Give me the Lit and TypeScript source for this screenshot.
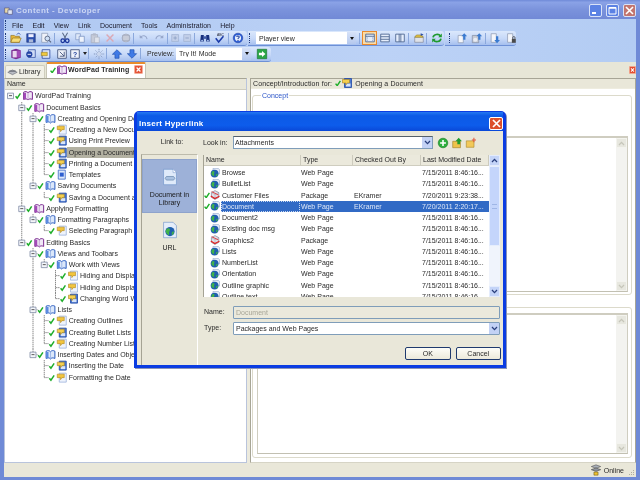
import { LitElement, css, html, svg, SVGTemplateResult } from "lit";
import { customElement } from "lit/decorators.js";

type TreeNode = { t: string; i: string; sel?: boolean; kids?: TreeNode[] };

const ROW = 11.25;

const check = svg`<path d="M.6 3.6 2.2 5.6 5.4 .8" fill="none" stroke="#1fae2a" stroke-width="1.5"/>`;

// tree and list icons, drawn in a 10x10 box
const small: Record<string, SVGTemplateResult> = {
  purple: svg`<path d="M.6 1.6C2.4.6 4 .8 5 2.2 6 .8 7.6.6 9.4 1.6V8.8C7.6 8 6 8 5 9.4 4 8 2.4 8 .6 8.8Z" fill="#f0e8f6" stroke="#7b2a90"/><path d="M5 2.2V9.2" stroke="#b48ac4" stroke-width=".7"/><path d="M.6 2.5V8.8L3 8.4V2Z" fill="#a24ab8"/>`,
  blue: svg`<path d="M.6 1.6C2.4.6 4 .8 5 2.2 6 .8 7.6.6 9.4 1.6V8.8C7.6 8 6 8 5 9.4 4 8 2.4 8 .6 8.8Z" fill="#dce8fa" stroke="#2a5cc0"/><path d="M5 2.2V9.2" stroke="#8aa8e0" stroke-width=".7"/><path d="M.6 2.5V8.8L3 8.4V2Z" fill="#5a8ae0"/>`,
  yellow: svg`<path d="M2.5.5H9.5V9.5H2.5Z" fill="#eef3fc" stroke="#9db4dc" stroke-width=".8"/><path d="M.5 1.5H7.5V5H5.2L3.8 7V5H.5Z" fill="#f2c53c" stroke="#b08820" stroke-width=".6"/>`,
  bluetopic: svg`<path d="M2.5.5H9.5V9.5H2.5Z" fill="#4a78d0" stroke="#1f47a4" stroke-width=".8"/><path d="M4 5.5H8.5V8.5H4Z" fill="#d8e4f8"/><path d="M.5 1.5H7.5V5H5.2L3.8 7V5H.5Z" fill="#f5cf4e" stroke="#a88420" stroke-width=".6"/>`,
  doc: svg`<path d="M1.5.5H8.5V9.5H1.5Z" fill="#dfe9fb" stroke="#3a66c4" stroke-width=".8"/><path d="M3 3H7V7H3Z" fill="#2f5fd0"/>`,
  globe: svg`<path d="M3 .3H8.2L9.6 1.8V6H3Z" fill="#e6ecf8" stroke="#8ca0c8" stroke-width=".6"/><circle cx="4.6" cy="5.6" r="3.9" fill="#1f5fae"/><path d="M2.4 3.2C4 2.8 5 3.6 4.4 4.8 3.4 5.6 4.8 6.6 4 8 2.6 8 1.6 6.6 1.2 5.4ZM6 6.4 7.8 5.4 7.4 7.8 6.2 8.4Z" fill="#3fb24a"/>`,
  package: svg`<path d="M1.4 2.6 5 .6 8.8 2.6V7.4L5 9.4 1.4 7.4Z" fill="#dfe2ea" stroke="#70768a" stroke-width=".6"/><path d="M1.4 2.6 5 4.6 8.8 2.6M5 4.6V9.4" fill="none" stroke="#8a90a0" stroke-width=".4"/><path d="M.8 6 4.8 8.6 9.4 6.2" fill="none" stroke="#e21e1e" stroke-width="1.2"/><path d="M1.6 1.6 8.4 5" stroke="#e21e1e" stroke-width=".8"/>`,
};

const tree: TreeNode = {
  t: "WordPad Training", i: "purple", kids: [
    { t: "Document Basics", i: "purple", kids: [
      { t: "Creating and Opening Documents", i: "blue", kids: [
        { t: "Creating a New Document", i: "yellow" },
        { t: "Using Print Preview", i: "bluetopic" },
        { t: "Opening a Document", i: "bluetopic", sel: true },
        { t: "Printing a Document", i: "bluetopic" },
        { t: "Templates", i: "doc" },
      ] },
      { t: "Saving Documents", i: "blue", kids: [{ t: "Saving a Document as a File", i: "bluetopic" }] },
    ] },
    { t: "Applying Formatting", i: "purple", kids: [
      { t: "Formatting Paragraphs", i: "blue", kids: [{ t: "Selecting Paragraph Text", i: "yellow" }] },
    ] },
    { t: "Editing Basics", i: "purple", kids: [
      { t: "Views and Toolbars", i: "blue", kids: [
        { t: "Work with Views", i: "blue", kids: [
          { t: "Hiding and Displaying Rulers", i: "yellow" },
          { t: "Hiding and Displaying Toolbars", i: "yellow" },
          { t: "Changing Word Wrap", i: "bluetopic" },
        ] },
      ] },
      { t: "Lists", i: "blue", kids: [
        { t: "Creating Outlines", i: "yellow" },
        { t: "Creating Bullet Lists", i: "bluetopic" },
        { t: "Creating Number Lists", i: "yellow" },
      ] },
      { t: "Inserting Dates and Objects", i: "blue", kids: [
        { t: "Inserting the Date", i: "bluetopic" },
        { t: "Formatting the Date", i: "yellow" },
      ] },
    ] },
  ],
};

const files = [
  ["Browse", "globe", "Web Page", "", "7/15/2011 8:46:16..."],
  ["BulletList", "globe", "Web Page", "", "7/15/2011 8:46:16..."],
  ["Customer Files", "package", "Package", "EKramer", "7/20/2011 9:23:38..."],
  ["Document", "globe", "Web Page", "EKramer", "7/20/2011 2:20:17..."],
  ["Document2", "globe", "Web Page", "", "7/15/2011 8:46:16..."],
  ["Existing doc msg", "globe", "Web Page", "", "7/15/2011 8:46:16..."],
  ["Graphics2", "package", "Package", "", "7/15/2011 8:46:16..."],
  ["Lists", "globe", "Web Page", "", "7/15/2011 8:46:16..."],
  ["NumberList", "globe", "Web Page", "", "7/15/2011 8:46:16..."],
  ["Orientation", "globe", "Web Page", "", "7/15/2011 8:46:16..."],
  ["Outline graphic", "globe", "Web Page", "", "7/15/2011 8:46:16..."],
  ["Outline text", "globe", "Web Page", "", "7/15/2011 8:46:16..."],
];

// toolbar icons, 14x14
const tb: Record<string, SVGTemplateResult> = {
  open: svg`<path d="M1 4H5L6 5H11V12H1Z" fill="#e9b93a" stroke="#8a6a18" stroke-width=".7"/><path d="M3 7H13L11 12H1Z" fill="#f7dd78" stroke="#8a6a18" stroke-width=".7"/><path d="M8 3C9 1 11 1 12 3" fill="none" stroke="#2a4fb0"/>`,
  save: svg`<path d="M2 2H12V12H2Z" fill="#2b4fae" stroke="#14296e" stroke-width=".6"/><path d="M4 2.5H10V6H4Z" fill="#eef"/><path d="M4.5 8.5H9.5V12H4.5Z" fill="#aab8d8"/>`,
  preview: svg`<path d="M2 1.5H9V12H2Z" fill="#eef1f8" stroke="#7c8ba8" stroke-width=".7"/><circle cx="8.6" cy="7.6" r="2.8" fill="#cfe0f6" stroke="#56627c"/><path d="M10.6 9.8 12.8 12" stroke="#56627c" stroke-width="1.3"/>`,
  cut: svg`<path d="M4 1 8 8M10 1 6 8" stroke="#5a6a88" stroke-width="1.2"/><circle cx="4.4" cy="10.2" r="2.1" fill="none" stroke="#16329a" stroke-width="1.5"/><circle cx="9.6" cy="10.2" r="2.1" fill="none" stroke="#16329a" stroke-width="1.5"/>`,
  copy: svg`<path d="M2 2H7.5V9H2Z" fill="#dfe8f8" stroke="#7e95c4" stroke-width=".8"/><path d="M6 5H12V12H6Z" fill="#eef3fc" stroke="#6e88bc" stroke-width=".8"/>`,
  paste: svg`<path d="M2.5 3H10V12.5H2.5Z" fill="#c6cbd8" stroke="#a2aabd" stroke-width=".8"/><path d="M4.5 1.5H8V4H4.5Z" fill="#b3bacb"/><path d="M6.5 6H12V12.5H6.5Z" fill="#dfe3ec" stroke="#a8afc0" stroke-width=".7"/>`,
  del: svg`<path d="M3 3 11 11M11 3 3 11" stroke="#dba8b4" stroke-width="1.7"/>`,
  misc: svg`<circle cx="7" cy="7" r="4.6" fill="#c8ccd8" stroke="#a6adc0"/><path d="M3 4H11V10H3Z" fill="none" stroke="#a6adc0" stroke-width=".8"/>`,
  undo: svg`<path d="M3.4 6C5 3.4 9.8 3.6 10.6 8.4" fill="none" stroke="#98a8cc" stroke-width="1.2"/><path d="M2 3.4V7.4H6Z" fill="#98a8cc"/>`,
  redo: svg`<path d="M10.6 6C9 3.4 4.2 3.6 3.4 8.4" fill="none" stroke="#98a8cc" stroke-width="1.2"/><path d="M12 3.4V7.4H8Z" fill="#98a8cc"/>`,
  boxp: svg`<path d="M2 3H10V11H2Z" fill="#c2cfe8" stroke="#9fb0d0" stroke-width=".8"/><path d="M4 7H8M6 5V9" stroke="#8ea0c4"/>`,
  boxm: svg`<path d="M2 3H10V11H2Z" fill="#c2cfe8" stroke="#9fb0d0" stroke-width=".8"/><path d="M4 7H8" stroke="#8ea0c4"/>`,
  find: svg`<path d="M2.2 3.4H5.6V11H1.4Z M8.4 3.4H11.8L12.6 11H8.4Z" fill="#18307e"/><path d="M5.4 5H8.6V8H5.4Z" fill="#3f5aa8"/><circle cx="3.6" cy="10" r="1.1" fill="#a9c4f0"/><circle cx="10.4" cy="10" r="1.1" fill="#a9c4f0"/>`,
  spell: svg`<text x="3.4" y="4.2" font-size="4" font-family="Liberation Sans" fill="#223">ABC</text><path d="M2 7.4 5.4 11.6 11 5" fill="none" stroke="#1a3aa8" stroke-width="1.8"/>`,
  help: svg`<circle cx="7" cy="7" r="5.6" fill="#2f5fd6" stroke="#1b3c9a" stroke-width=".6"/><circle cx="7" cy="7" r="3.6" fill="#e8effc"/><path d="M5.4 5.6C5.8 4.2 8.6 4.4 8.4 6 8.2 7 7 7 7 8.2" fill="none" stroke="#1b3c9a" stroke-width="1.2"/><circle cx="7" cy="9.8" r=".8" fill="#1b3c9a"/>`,
  v1: svg`<path d="M2 2.5H12V11.5H2Z" fill="#e6eefc" stroke="#4a648e"/><path d="M2 5H12" stroke="#4a648e"/><path d="M4 5.5V11M10 5.5V11" stroke="#8ea4c8" stroke-dasharray="1 1"/>`,
  v2: svg`<path d="M2 2.5H12V11.5H2Z" fill="#e6eefc" stroke="#4a648e"/><path d="M2 5.5H12M2 8.5H12" stroke="#4a648e"/>`,
  v3: svg`<path d="M2 2.5H12V11.5H2Z" fill="#e6eefc" stroke="#4a648e"/><path d="M6 2.5V11.5M8 2.5V11.5" stroke="#4a648e"/>`,
  pub: svg`<path d="M2 6H12V12H2Z" fill="#dfe2e8" stroke="#7a8090" stroke-width=".7"/><path d="M4 3.5H10L12 6H2Z" fill="#e8c94a" stroke="#8a7420" stroke-width=".7"/><path d="M9 1.4 12.4 3 9 4.6Z" fill="#2e4ea8"/>`,
  refresh: svg`<path d="M2.4 6.4C3 2.6 8.8 1.6 11 4.4" fill="none" stroke="#1f9a2e" stroke-width="2"/><path d="M12.6 1.8V6H8.4Z" fill="#1f9a2e"/><path d="M11.6 7.6C11 11.4 5.2 12.4 3 9.6" fill="none" stroke="#1f9a2e" stroke-width="2"/><path d="M1.4 12.2V8H5.6Z" fill="#1f9a2e"/>`,
  up1: svg`<path d="M2.5 4H8.5V12.5H2.5Z" fill="#f4f6fb" stroke="#8a96ae" stroke-width=".8"/><path d="M9.6 1.4 13 5H11V9H8.4V5H6.4Z" fill="#3a7ad0"/>`,
  up2: svg`<path d="M1.5 4H9V12.5H1.5Z" fill="#c6cad4" stroke="#7e8aa2" stroke-width=".8"/><circle cx="5" cy="9" r="2.4" fill="#e8ecf4"/><path d="M9.6 1.4 13 5H11V9H8.4V5H6.4Z" fill="#3a7ad0"/>`,
  down1: svg`<path d="M2.5 2H8.5V12H2.5Z" fill="#f4f6fb" stroke="#8a96ae" stroke-width=".8"/><path d="M9.4 13 6.2 9.4H8.2V5H10.8V9.4H12.8Z" fill="#3a7ad0"/>`,
  lock: svg`<path d="M3 2H9V12H3Z" fill="#f4f6fb" stroke="#8a96ae" stroke-width=".8"/><path d="M8 8H12.6V12.6H8Z" fill="#4a4a4a"/><path d="M9 8V6.4C9 5 11.6 5 11.6 6.4V8" fill="none" stroke="#4a4a4a"/>`,
  t1: svg`<path d="M1.5 2.5 7 1 12.5 2.5V11.5L7 13 1.5 11.5Z" fill="#7b2a90"/><path d="M3 3.4H8V11H3Z" fill="#e8d4ee"/><path d="M8 3H12V11H8Z" fill="#a24ab8"/>`,
  t2: svg`<path d="M4 2H12V11H4Z" fill="#cfdcf6" stroke="#24429a" stroke-width=".8"/><circle cx="5" cy="7.4" r="3.6" fill="#2344a4"/><path d="M3 7.4H7" stroke="#fff"/>`,
  t3: svg`<path d="M2.5 2H11.5V12H2.5Z" fill="#dde7fa" stroke="#24429a" stroke-width=".9"/><path d="M1.5 5H8.5V9H1.5Z" fill="#efc83e" stroke="#8a6f18" stroke-width=".6"/>`,
  t4: svg`<path d="M2 2H12V12H2Z" fill="#eef2fb" stroke="#3f4f7a"/><path d="M4.4 4.4 9.6 9.6M9.6 4.4V9.6H4.4" fill="none" stroke="#3f4f7a"/>`,
  t5: svg`<path d="M2 2H12V12H2Z" fill="#eef2fb" stroke="#3f4f7a"/><text x="4.6" y="10.4" font-size="8" font-family="Liberation Sans" font-weight="700" fill="#24429a">?</text>`,
  spark: svg`<path d="M7 1V13M1 7H13M3 3 11 11M11 3 3 11" stroke="#7d8fb4" stroke-dasharray="1.4 .8"/><circle cx="7" cy="7" r="2.2" fill="#c9d6ee"/>`,
  up: svg`<path d="M7 2 12.4 7.4H9.4V12H4.6V7.4H1.6Z" fill="#3f7ae6" stroke="#1a4aa8" stroke-width=".7"/>`,
  down: svg`<path d="M7 12 12.4 6.6H9.4V2H4.6V6.6H1.6Z" fill="#3f7ae6" stroke="#1a4aa8" stroke-width=".7"/>`,
  go: svg`<path d="M1.5 1.5H12.5V12.5H1.5Z" fill="#2aa646" stroke="#14702a" stroke-width=".7"/><path d="M7 3.4 11 7 7 10.6V8.6H3.4V5.4H7Z" fill="#fff"/>`,
  tabclose: svg`<path d="M1 1H13V13H1Z" fill="#e24a2e" stroke="#f5a58c" stroke-width="1.2"/><path d="M4 4 10 10M10 4 4 10" stroke="#fff" stroke-width="2"/>`,
  library: svg`<path d="M1 8 7 5 13 8 7 11Z" fill="#b9bcc4" stroke="#5a5e68" stroke-width=".7"/><path d="M3 5.6H11V7.4H3Z" fill="#70747e"/>`,
  online: svg`<path d="M1.5 3 7 1 12.5 3 7 5Z" fill="#aab0ba" stroke="#555" stroke-width=".7"/><path d="M1.5 6.6 7 4.6 12.5 6.6 7 8.6Z" fill="#8e949e" stroke="#444" stroke-width=".7"/><path d="M4.6 9.4H9.4V13H4.6Z" fill="#f1c32e" stroke="#5a4a10" stroke-width=".6"/>`,
  add: svg`<circle cx="7" cy="7" r="5.6" fill="#2eae3c" stroke="#157a24" stroke-width=".7"/><path d="M7 3.6V10.4M3.6 7H10.4" stroke="#fff" stroke-width="1.8"/>`,
  folderup: svg`<path d="M2 5H11V12.5H2Z" fill="#eec24a" stroke="#9a7a20" stroke-width=".7"/><path d="M9 1 12.8 5H10.6V8.6H7.4V5H5.2Z" fill="#1f9a2e"/>`,
  foldernew: svg`<path d="M1.5 4.5H10.5V12H1.5Z" fill="#f2c95a" stroke="#a8842a" stroke-width=".7"/><path d="M10.4 1V6M8 3.4H12.8" stroke="#e2543a" stroke-width="1.2"/>`,
  docLib: svg`<path d="M2 1H9.4L12 3.6V13H2Z" fill="#dfeafa" stroke="#6d92c8" stroke-width=".5"/><path d="M9.4 1V3.6H12" fill="#fff" stroke="#6d92c8" stroke-width=".4"/><path d="M4.2 6.6H9.8L10.8 8 9.8 9.4H4.2L3.2 8Z" fill="#aac2e2" stroke="#5e7ea6" stroke-width=".5"/>`,
  docUrl: svg`<path d="M2 1H9.4L12 3.6V13H2Z" fill="#e4edfa" stroke="#6d92c8" stroke-width=".5"/><circle cx="7" cy="8.2" r="3.6" fill="#1f5fae"/><path d="M5 5.6C7 5.4 7.6 7 6.6 8 5.8 9 7 10.2 6 11 4.4 10.4 3.4 8.6 3.6 7.4ZM8.4 8.6 10.2 8 9.6 10.4 8.4 11Z" fill="#3fb24a"/>`,
};

const icon = (n: string) => html`<svg class="ic" viewBox="0 0 14 14">${tb[n]}</svg>`;

@customElement("app-root")
export class AppRoot extends LitElement {
  static styles = css`
    :host {
      display: block;
      width: 640px;
      height: 480px;
      font-family: "Liberation Sans", Arial, sans-serif;
      font-size: 7px;
      color: #2a2a2a;
    }
    .win {
      position: relative;
      width: 640px;
      height: 480px;
      display: flex;
      flex-direction: column;
      overflow: hidden;
      background: #6f8ad6;
      filter: blur(0.3px);
    }
    .title {
      height: 19px;
      flex: none;
      display: flex;
      align-items: center;
      padding: 2px 4px 1px 4px;
      box-sizing: border-box;
      background: linear-gradient(#6f8ad8, #8aa2e6 12%, #7b93dc 50%, #7189d6);
      gap: 3px;
    }
    .title-text {
      flex: 1;
      font-size: 8px;
      font-weight: bold;
      letter-spacing: 0.45px;
      color: #cbd6f4;
    }
    .title-icon { width: 9px; height: 9px; }
    .wbtn {
      width: 11px;
      height: 11px;
      border: 1px solid #d9e2f7;
      border-radius: 2px;
      background: #5c82e4;
      display: flex;
      align-items: center;
      justify-content: center;
      margin-left: 1px;
    }
    .wbtn.close { background: #c2756f; }
    .wbtn svg { width: 9px; height: 9px; }
    .client {
      flex: 1;
      min-height: 0;
      margin: 0 4px 3px;
      display: flex;
      flex-direction: column;
    }
    .bars {
      height: 43px;
      flex: none;
      display: flex;
      flex-direction: column;
      background: linear-gradient(90deg, #afc8f2, #bcd2f6 60%, #b3ccf3);
    }
    .menu {
      height: 13px;
      display: flex;
      align-items: center;
      padding-left: 1px;
    }
    .menu span { margin-right: 9.2px; color: #1a1a2a; }
    .menu .grip { margin-right: 5px; }
    .grip {
      width: 1px;
      height: 10px;
      border-left: 1px dotted #1f3a7c;
      flex: none;
    }
    .tbrow { height: 15px; display: flex; margin-bottom: 0.5px; }
    .tb {
      display: flex;
      align-items: center;
      height: 15px;
      box-sizing: border-box;
      border-bottom: 1px solid #6d90d6;
      border-radius: 0 3px 3px 0;
      background: linear-gradient(#dbe8fc, #c6d8f8 55%, #a5bfee);
      padding-left: 1px;
    }
    .tb .grip { margin-right: 1px; }
    .b {
      width: 15.3px;
      height: 14px;
      flex: none;
      display: flex;
      align-items: center;
      justify-content: center;
      box-sizing: border-box;
    }
    .b.n { width: 12px; }
    .b.on {
      background: #fbdca8;
      border: 1.5px solid #e98a2e;
    }
    .ic { width: 12px; height: 12px; display: block; flex: none; }
    .sep {
      width: 3px;
      height: 11px;
      flex: none;
      box-sizing: border-box;
      border-left: 1px solid #8ba8dc;
    }
    .combo {
      height: 12px;
      background: #fff;
      display: flex;
      align-items: center;
      box-sizing: border-box;
      padding-left: 3px;
      flex: none;
    }
    .combo .txt { flex: 1; white-space: nowrap; overflow: hidden; }
    .arrow {
      width: 9px;
      height: 100%;
      flex: none;
      background: linear-gradient(#d7e2f8, #b4c8ee);
      display: flex;
      align-items: center;
      justify-content: center;
    }
    .arrow::after {
      content: "";
      border: 2.5px solid transparent;
      border-top: 3px solid #111;
      border-bottom: 0;
    }
    .label { margin: 0 2px 0 4px; white-space: nowrap; width: 27px; flex: none; }
    .drop {
      width: 7px;
      display: flex;
      justify-content: center;
    }
    .drop::after {
      content: "";
      border: 2px solid transparent;
      border-top: 3px solid #222;
      border-bottom: 0;
    }
    .tabs {
      height: 16px;
      flex: none;
      display: flex;
      align-items: flex-end;
      padding-left: 1px;
      background: #e7e6d7;
      gap: 1px;
      position: relative;
    }
    .tab {
      display: flex;
      align-items: center;
      box-sizing: border-box;
      white-space: nowrap;
    }
    .tab.lib {
      width: 40px;
      height: 13px;
      background: #f1f0e7;
      border: 1px solid #cfcdbd;
      border-bottom: 0;
      padding: 0 0 2px 1px;
      gap: 1px;
      border-radius: 2px 2px 0 0;
    }
    .tab.act {
      width: 100px;
      height: 16px;
      background: #fff;
      border-top: 2px solid #e88e2e;
      border-left: 1px solid #c8c6b6;
      border-right: 1px solid #c8c6b6;
      padding: 0 0 3px 3px;
      font-weight: bold;
      border-radius: 2px 2px 0 0;
    }
    .tab.act .chk { width: 6px; height: 6px; margin-right: 1px; }
    .tab.act .bk { width: 10px; height: 10px; margin-right: 1px; }
    .tab.act .name { flex: 1; letter-spacing: 0.1px; }
    .tab.act .x { width: 9px; height: 9px; margin-right: 2px; }
    .tabs .x-right {
      margin-left: auto;
      width: 7px;
      height: 8px;
      align-self: center;
    }
    .panes {
      flex: 1;
      min-height: 0;
      display: flex;
      gap: 3px;
      background: #eceadd;
    }
    .left {
      width: 243px;
      flex: none;
      box-sizing: border-box;
      border: 1px solid #b9c4dc;
      border-top-color: #a7a596;
      background: #fff;
      display: flex;
      flex-direction: column;
      overflow: hidden;
    }
    .head {
      height: 10px;
      flex: none;
      line-height: 10px;
      background: #e9e7d9;
      border-bottom: 1px solid #cfcdbf;
      padding-left: 2px;
    }
    .tree { padding-top: 0.4px; }
    .row {
      height: 11.25px;
      display: flex;
      align-items: center;
      white-space: nowrap;
    }
    .row svg { flex: none; height: 11.25px; display: block; }
    .row .t { padding: 0 2px; line-height: 11.25px; margin-left: -2px; }
    .row .t.sel { background: #b3b1a2; width: 180px; }
    .right {
      flex: 1;
      min-width: 0;
      box-sizing: border-box;
      border: 1px solid #a7a596;
      border-bottom-color: #d6d4c6;
      background: #fff;
      display: flex;
      flex-direction: column;
    }
    .rhead {
      height: 10px;
      flex: none;
      display: flex;
      align-items: center;
      background: #e9e7d9;
      padding: 0 0 1px 2px;
      box-sizing: border-box;
      border-bottom: 1px solid #eeecdf;
      letter-spacing: 0.1px;
    }
    .rhead svg { flex: none; }
    .rbody {
      flex: 1;
      min-height: 0;
      padding: 3px 3px 0 1px;
      display: flex;
      flex-direction: column;
      gap: 12px;
    }
    fieldset {
      margin: 0;
      padding: 0 3px 2px 4px;
      min-width: 0;
      border: 1px solid #dcdacb;
      border-radius: 3px;
      box-sizing: border-box;
    }
    legend {
      color: #2b55c8;
      padding: 0 1px;
      margin-left: 4px;
      line-height: 7px;
    }
    .f1 { padding-top: 37px; }
    .f1 .area { height: 156px; }
    .f2 { padding-top: 5px; padding-bottom: 3px; }
    .f2 .area { height: 141px; }
    .area {
      box-sizing: border-box;
      border: 1px solid #cfcdc0;
      border-top-width: 2px;
      border-bottom: 1px solid #c2c0b2;
      display: flex;
      justify-content: flex-end;
    }
    .sb {
      width: 11px;
      flex: none;
      display: flex;
      flex-direction: column;
      background: #f3f3f0;
    }
    .sb .sp { flex: 1; }
    .sb .btn {
      height: 10px;
      flex: none;
      display: flex;
      align-items: center;
      justify-content: center;
      background: #e7e7df;
      border: 1px solid #f3f3ee;
      box-sizing: border-box;
    }
    .sb svg { width: 7px; height: 5px; }
    .status {
      height: 14px;
      flex: none;
      display: flex;
      align-items: center;
      background: #e9e7d9;
      gap: 2px;
    }
    .status .fill { flex: 1; }
    .status .corner { width: 7px; height: 7px; margin: 4px 1px 0 2px; }
    .dlg {
      position: absolute;
      left: 134px;
      top: 111px;
      width: 372px;
      height: 257px;
      box-sizing: border-box;
      border: 3px solid #0a3ce2;
      border-top: 1px solid #0a3ce2;
      border-radius: 5px 5px 0 0;
      background: #e9e7d9;
      display: flex;
      flex-direction: column;
      box-shadow: 1px 1px 0 #8a94b8;
    }
    .dtitle {
      height: 19px;
      flex: none;
      display: flex;
      align-items: center;
      justify-content: space-between;
      padding: 3px 0 0 2px;
      box-sizing: border-box;
      background: linear-gradient(#2478f2, #0c5ae6 20%, #0d5ceb 70%, #0a48d8);
      color: #fff;
      font-weight: bold;
      font-size: 8px;
      letter-spacing: 0.25px;
    }
    .dclose {
      width: 14px;
      height: 13px;
      border: 1px solid #fff;
      border-radius: 2px;
      background: #dc4f2c;
      display: flex;
      align-items: center;
      justify-content: center;
      box-sizing: border-box;
    }
    .dclose svg { width: 9px; height: 9px; }
    .dbody { flex: 1; min-height: 0; display: flex; }
    .side {
      width: 60px;
      margin-left: 4px;
      flex: none;
      display: flex;
      flex-direction: column;
    }
    .side .lt { height: 23px; line-height: 21px; text-align: center; width: 62px; }
    .rail {
      flex: 1;
      box-sizing: border-box;
      width: 57px;
      border-left: 1px solid #a5a394;
      border-top: 1px solid #bdbbac;
      border-right: 1px solid #fff;
      background: #e9e7d9;
      padding-top: 4px;
    }
    .item {
      height: 54px;
      display: flex;
      flex-direction: column;
      align-items: center;
      padding-top: 7px;
      box-sizing: border-box;
      text-align: center;
      line-height: 8px;
      color: #1a1a1a;
    }
    .item.on {
      background: #9db1d8;
      border: 1px solid #8ea3cc;
    }
    .item svg { width: 18px; height: 20px; margin-bottom: 4px; flex: none; }
    .main {
      flex: 1;
      min-width: 0;
      padding: 5px 3px 0 2px;
      display: flex;
      flex-direction: column;
    }
    .look {
      height: 13px;
      display: flex;
      align-items: center;
      flex: none;
    }
    .look .lbl { width: 30px; flex: none; }
    .look .ctl {
      width: 200px;
      height: 13px;
      border: 1px solid #7f9db9;
      box-sizing: border-box;
      background: #fff;
      display: flex;
      align-items: center;
      padding-left: 1px;
      border-top-color: #55606a;
    }
    .look .ctl .t { flex: 1; }
    .xarrow {
      width: 10px;
      height: 100%;
      flex: none;
      background: #c3d2f5;
      display: flex;
      align-items: center;
      justify-content: center;
    }
    .xarrow svg { width: 7px; height: 5px; }
    .tools { display: flex; margin-left: 4px; gap: 2px; }
    .list {
      height: 142px;
      margin-top: 6px;
      flex: none;
      display: flex;
      background: #fff;
      border-left: 1px solid #a5a394;
      overflow: hidden;
    }
    .lmain { flex: 1; min-width: 0; display: flex; flex-direction: column; }
    .lhead {
      height: 10px;
      flex: none;
      display: grid;
      grid-template-columns: 97px 52px 68px 1fr;
      background: #ebe9dc;
      border-bottom: 1px solid #cfcdbf;
      line-height: 10px;
    }
    .lhead span { padding-left: 2px; border-right: 1px solid #cdcbbd; }
    .lrows { padding-top: 1px; }
    .frow { height: 11.25px; display: flex; align-items: center; }
    .frow .lead { width: 17px; flex: none; display: flex; align-items: center; }
    .frow .lead svg.c { width: 6px; height: 6px; flex: none; }
    .frow .lead svg.i { width: 10px; height: 10px; flex: none; margin-left: auto; margin-right: 1px; }
    .cells {
      flex: 1;
      min-width: 0;
      height: 100%;
      display: grid;
      grid-template-columns: 79px 53px 68px 1fr;
      line-height: 11.25px;
      white-space: nowrap;
    }
    .cells span { padding-left: 1px; overflow: hidden; }
    .cells.sel { background: #316ac5; color: #dfe8f8; }
    .cells.sel span:first-child { outline: 1px dotted #c8d8f0; outline-offset: -1px; }
    .list .sb { background: #f0f4fc; width: 11px; }
    .list .btn { background: #c4d4f8; border: 1px solid #e4ecfc; height: 11px; }
    .thumb {
      height: 80px;
      flex: none;
      background: #c4d5fb;
      border: 1px solid #e6eefd;
      box-sizing: border-box;
      display: flex;
      align-items: center;
      justify-content: center;
    }
    .thumb::after { content: ""; width: 5px; height: 3px; border-top: 1px solid #9fb6e6; border-bottom: 1px solid #9fb6e6; }
    .field {
      display: flex;
      align-items: center;
      height: 13px;
      flex: none;
      margin-top: 3px;
    }
    .field.first { margin-top: 9px; }
    .field .lbl { width: 30px; flex: none; padding: 0 0 2px 1px; box-sizing: border-box; }
    .field .in {
      flex: 1;
      height: 13px;
      box-sizing: border-box;
      border: 1px solid #7f9db9;
      border-radius: 1px;
      display: flex;
      align-items: center;
      padding-left: 2px;
      background: #fff;
    }
    .field .in.off { background: #ebe9dc; color: #a8a698; }
    .field .in .t { flex: 1; }
    .btns {
      margin: 12px -1px 0 0;
      display: flex;
      justify-content: flex-end;
      gap: 5px;
      flex: none;
    }
    .push {
      width: 45.5px;
      height: 13px;
      box-sizing: border-box;
      border: 1px solid #1f3a6e;
      border-radius: 2px;
      background: linear-gradient(#fdfdf8, #ece9da);
      font-family: inherit;
      font-size: 7px;
      color: #2a2a2a;
      padding: 0;
      line-height: 11px;
    }
  `;

  // flattens the tree, a row knows which ancestor guide lines run past it
  private rows(n: TreeNode, level: number, cont: boolean[], last: boolean): unknown[] {
    const w = 30 + ROW * level;
    const x = 5 + ROW * level;
    const mid = ROW / 2;
    const guides = cont
      .map((c, k) => (c ? svg`<path d="M${5 + ROW * k + 0.5} 0V${ROW}"/>` : null));
    const row = html`<div class="row">
      <svg width=${w} viewBox="0 0 ${w} ${ROW}">
        <g stroke="#8a8a8a" stroke-width="1" stroke-dasharray="1.4 .6" fill="none">
          ${guides}
          ${level > 0
            ? svg`<path d="M${x + 0.5} 0V${last ? mid : ROW}M${x + 0.5} ${mid}H${x + 5}"/>`
            : null}
        </g>
        ${n.kids
          ? svg`<path d="M${x - 2.5} ${mid - 2.5}h6v5.5h-6z" fill="#f4f6fa" stroke="#7f8aa4" stroke-width=".8"/><path d="M${x - 1} ${mid}h3" stroke="#333" stroke-width=".8"/>`
          : null}
        <g transform="translate(${x + 5} ${mid - 3})">${check}</g>
        <g transform="translate(${x + 13} ${mid - 5})">${small[n.i]}</g>
      </svg>
      <span class="t ${n.sel ? "sel" : ""}">${n.t}</span>
    </div>`;
    const out: unknown[] = [row];
    (n.kids ?? []).forEach((k, i, all) => {
      const isLast = i === all.length - 1;
      const next = level > 0 ? [...cont, !last] : cont;
      out.push(...this.rows(k, level + 1, level === 0 ? [false] : next, isLast));
    });
    return out;
  }

  private sb(thumb: boolean) {
    const chev = (d: string, c: string) =>
      html`<svg viewBox="0 0 7 5"><path d=${d} fill="none" stroke=${c} stroke-width="1.3"/></svg>`;
    const col = thumb ? "#2a3f7c" : "#c6c6ba";
    return html`<div class="sb">
      <div class="btn">${chev("M1 4 3.5 1.4 6 4", col)}</div>
      ${thumb ? html`<div class="thumb"></div>` : null}
      <div class="sp"></div>
      <div class="btn">${chev("M1 1 3.5 3.6 6 1", col)}</div>
    </div>`;
  }

  private xarrow() {
    return html`<div class="xarrow"><svg viewBox="0 0 7 5"><path d="M1 1 3.5 3.6 6 1" fill="none" stroke="#2a3f7c" stroke-width="1.3"/></svg></div>`;
  }

  render() {
    return html`<div class="win">
      <div class="title">
        <svg class="title-icon" viewBox="0 0 14 14">
          <path d="M1 3H8V11H1Z" fill="#e9d9a6" stroke="#55557a"/><path d="M6 6H13V13H6Z" fill="#dfe6f5" stroke="#55557a"/>
        </svg>
        <div class="title-text">Content - Developer</div>
        <div class="wbtn"><svg viewBox="0 0 9 9"><path d="M1 7H5" stroke="#fff" stroke-width="2"/></svg></div>
        <div class="wbtn"><svg viewBox="0 0 9 9"><path d="M1 1.5H8V8H1Z" fill="none" stroke="#fff"/><path d="M1 2H8" stroke="#fff" stroke-width="1.5"/></svg></div>
        <div class="wbtn close"><svg viewBox="0 0 9 9"><path d="M1 1 8 8M8 1 1 8" stroke="#fff" stroke-width="1.6"/></svg></div>
      </div>

      <div class="client">
        <div class="bars">
          <div class="menu">
            <div class="grip"></div>
            <span>File</span><span>Edit</span><span>View</span><span>Link</span><span>Document</span><span>Tools</span><span>Administration</span><span>Help</span>
          </div>

          <div class="tbrow">
            <div class="tb" style="width:243px">
              <div class="grip"></div>
              <div class="b">${icon("open")}</div><div class="b">${icon("save")}</div><div class="b">${icon("preview")}</div>
              <div class="sep"></div>
              <div class="b">${icon("cut")}</div><div class="b">${icon("copy")}</div><div class="b">${icon("paste")}</div><div class="b">${icon("del")}</div><div class="b">${icon("misc")}</div>
              <div class="sep"></div>
              <div class="b">${icon("undo")}</div><div class="b">${icon("redo")}</div>
              <div class="sep"></div>
              <div class="b n">${icon("boxp")}</div><div class="b n">${icon("boxm")}</div>
              <div class="sep"></div>
              <div class="b">${icon("find")}</div><div class="b">${icon("spell")}</div>
              <div class="sep"></div>
              <div class="b">${icon("help")}</div>
            </div>
            <div class="tb" style="width:196px;margin-left:1px">
              <div class="grip" style="margin-right:5px"></div>
              <div class="combo" style="width:100px"><span class="txt">Player view</span><div class="arrow"></div></div>
              <div class="sep" style="margin-left:3px"></div>
              <div class="b on">${icon("v1")}</div><div class="b">${icon("v2")}</div><div class="b">${icon("v3")}</div>
              <div class="sep"></div>
              <div class="b">${icon("pub")}</div>
              <div class="sep"></div>
              <div class="b">${icon("refresh")}</div>
            </div>
            <div class="tb" style="width:71px;margin-left:1px">
              <div class="grip" style="margin-right:3px;margin-left:3px"></div>
              <div class="b">${icon("up1")}</div><div class="b">${icon("up2")}</div>
              <div class="sep"></div>
              <div class="b">${icon("down1")}</div><div class="b">${icon("lock")}</div>
            </div>
          </div>

          <div class="tbrow">
            <div class="tb" style="width:267px">
              <div class="grip"></div>
              <div class="b">${icon("t1")}</div><div class="b">${icon("t2")}</div><div class="b">${icon("t3")}</div><div class="b">${icon("t4")}</div>
              <div class="b n">${icon("t5")}</div><div class="drop"></div>
              <div class="sep"></div>
              <div class="b">${icon("spark")}</div>
              <div class="sep"></div>
              <div class="b">${icon("up")}</div><div class="b">${icon("down")}</div>
              <div class="sep"></div>
              <span class="label">Preview:</span>
              <div class="combo" style="width:75px"><span class="txt">Try It! Mode</span><div class="arrow"></div></div>
              <div class="b" style="margin-left:3px">${icon("go")}</div>
            </div>
          </div>
        </div>

        <div class="tabs">
          <div class="tab lib"><svg class="ic" style="width:11px;height:11px" viewBox="0 0 14 14">${tb.library}</svg>Library</div>
          <div class="tab act">
            <svg class="chk" viewBox="0 0 6 6">${check}</svg>
            <svg class="bk" viewBox="0 0 10 10">${small.purple}</svg>
            <span class="name">WordPad Training</span>
            <svg class="x" viewBox="0 0 14 14">${tb.tabclose}</svg>
          </div>
          <svg class="x-right" viewBox="0 0 14 14" preserveAspectRatio="none">${tb.tabclose}</svg>
        </div>

        <div class="panes">
          <div class="left">
            <div class="head">Name</div>
            <div class="tree">${this.rows(tree, 0, [], true)}</div>
          </div>
          <div class="right">
            <div class="rhead">
              <span>Concept/Introduction for:</span>
              <svg width="6" height="6" viewBox="0 0 6 6" style="margin-left:3px">${check}</svg>
              <svg width="10" height="10" viewBox="0 0 10 10" style="margin:0 3px 0 1px">${small.bluetopic}</svg>
              <span>Opening a Document</span>
            </div>
            <div class="rbody">
              <fieldset class="f1">
                <legend>Concept</legend>
                <div class="area">${this.sb(false)}</div>
              </fieldset>
              <fieldset class="f2">
                <div class="area">${this.sb(false)}</div>
              </fieldset>
            </div>
          </div>
        </div>

        <div class="status">
          <div class="fill"></div>
          <svg class="ic" viewBox="0 0 14 14">${tb.online}</svg><span>Online</span>
          <svg class="corner" viewBox="0 0 7 7"><path d="M5 1h1v1H5zM3 3h1v1H3zM5 3h1v1H5zM1 5h1v1H1zM3 5h1v1H3zM5 5h1v1H5z" fill="#b0ae9e"/></svg>
        </div>
      </div>

      ${this.dialog()}
    </div>`;
  }

  private dialog() {
    return html`<div class="dlg">
      <div class="dtitle">
        <span>Insert Hyperlink</span>
        <div class="dclose"><svg viewBox="0 0 9 9"><path d="M1 1 8 8M8 1 1 8" stroke="#fff" stroke-width="1.7"/></svg></div>
      </div>
      <div class="dbody">
        <div class="side">
          <div class="lt">Link to:</div>
          <div class="rail">
            <div class="item on">
              <svg viewBox="0 0 14 14">${tb.docLib}</svg>
              <span>Document in Library</span>
            </div>
            <div class="item">
              <svg viewBox="0 0 14 14">${tb.docUrl}</svg>
              <span>URL</span>
            </div>
          </div>
        </div>
        <div class="main">
          <div class="look">
            <span class="lbl">Look in:</span>
            <div class="ctl"><span class="t">Attachments</span>${this.xarrow()}</div>
            <div class="tools">${icon("add")}${icon("folderup")}${icon("foldernew")}</div>
          </div>
          <div class="list">
            <div class="lmain">
              <div class="lhead"><span>Name</span><span>Type</span><span>Checked Out By</span><span>Last Modified Date</span></div>
              <div class="lrows">
                ${files.map(
                  ([name, ic, type, by, date]) => html`<div class="frow">
                    <div class="lead">
                      ${by
                        ? html`<svg class="c" viewBox="0 0 6 6">${check}</svg>`
                        : null}
                      <svg class="i" viewBox="0 0 10 10">${small[ic]}</svg>
                    </div>
                    <div class="cells ${name === "Document" ? "sel" : ""}">
                      <span>${name}</span><span>${type}</span><span>${by}</span><span>${date}</span>
                    </div>
                  </div>`
                )}
              </div>
            </div>
            ${this.sb(true)}
          </div>
          <div class="field first">
            <span class="lbl">Name:</span>
            <div class="in off">Document</div>
          </div>
          <div class="field">
            <span class="lbl">Type:</span>
            <div class="in" style="padding-right:0"><span class="t">Packages and Web Pages</span>${this.xarrow()}</div>
          </div>
          <div class="btns">
            <button class="push">OK</button>
            <button class="push">Cancel</button>
          </div>
        </div>
      </div>
    </div>`;
  }
}
